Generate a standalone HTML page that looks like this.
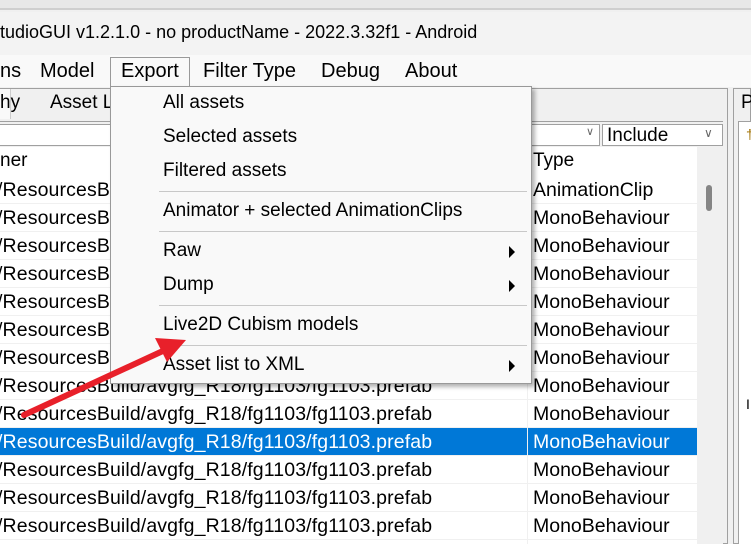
<!DOCTYPE html>
<html><head><style>
*{margin:0;padding:0;box-sizing:border-box}
body{width:751px;height:544px;overflow:hidden;background:#f0f0f0;font-family:"Liberation Sans",sans-serif;font-size:19px;color:#000;position:relative}
.a{position:absolute;white-space:nowrap}
.row{position:absolute;left:0;width:697px;height:28px;border-bottom:1px solid #f0f0f0;background:#fff;font-size:19.5px}
.row span{position:absolute;top:3px}
.mi{position:absolute;left:52px;font-size:19px}
.sep{position:absolute;left:48px;right:4px;height:1px;background:#c8c8c8}
.tri{position:absolute;left:398px;width:0;height:0;border-left:6px solid #000;border-top:6px solid transparent;border-bottom:6px solid transparent}
.mb{position:absolute;top:60px;font-size:20px}
</style></head><body>
<div class="a" style="left:0;top:0;width:751px;height:10px;background:#e8e8e8;border-bottom:2px solid #cfcfcf"></div>
<div class="a" style="left:0;top:12px;width:751px;height:43px;background:#f3f3f3"></div>
<div class="a" style="left:0;top:22px;font-size:18px">tudioGUI v1.2.1.0 - no productName - 2022.3.32f1 - Android</div>
<div class="a" style="left:0;top:55px;width:751px;height:32px;background:#f9f9f9"></div>
<div class="a" style="left:110px;top:57px;width:80px;height:30px;border:1px solid #999;border-bottom:none;background:#f9f9f9"></div>
<div class="mb" style="left:0">ns</div>
<div class="mb" style="left:40px">Model</div>
<div class="mb" style="left:121px">Export</div>
<div class="mb" style="left:203px">Filter Type</div>
<div class="mb" style="left:321px">Debug</div>
<div class="mb" style="left:405px">About</div>
<div class="a" style="left:0;top:88px;width:728px;height:456px;border:1px solid #a0a0a0;border-left:none;background:#f0f0f0"></div>
<div class="a" style="left:0;top:89px;width:11px;height:30px;background:#f9f9f9;border-right:1px solid #ccc"></div>
<div class="a" style="left:0;top:92px">hy</div>
<div class="a" style="left:50px;top:92px">Asset L</div>
<div class="a" style="left:0;top:121px;width:723px;height:1px;background:#a0a0a0"></div>
<div class="a" style="left:0;top:124px;width:600px;height:22px;background:#fff;border:1px solid #a0a0a0;border-left:none"></div>
<div class="a" style="left:586px;top:125px;font-size:11px;color:#666">&#8744;</div>
<div class="a" style="left:602px;top:124px;width:121px;height:22px;background:#fff;border:1px solid #a0a0a0"></div>
<div class="a" style="left:607px;top:125px">Include</div>
<div class="a" style="left:704px;top:126px;font-size:12px;color:#666">&#8744;</div>
<div class="a" style="left:0;top:147px;width:723px;height:397px;background:#fff"></div>
<div class="a" style="left:0;top:150px">ner</div>
<div class="a" style="left:533px;top:150px">Type</div>
<div class="a" style="left:697px;top:147px;width:26px;height:397px;background:#f0f0f0"></div>
<div class="a" style="left:706px;top:185px;width:6px;height:26px;background:#858585;border-radius:3px"></div>
<div id="rows"></div>
<div class="a" style="left:527px;top:176px;width:1px;height:368px;background:#f0f0f0"></div>
<div class="a" style="left:733px;top:88px;width:18px;height:456px;border:1px solid #a0a0a0;background:#f0f0f0"></div>
<div class="a" style="left:741px;top:92px">P</div>
<div class="a" style="left:738px;top:121px;width:13px;height:423px;border-left:1px solid #a0a0a0;border-top:1px solid #a0a0a0;background:#fff"></div>
<div class="a" style="left:746px;top:126px;font-size:14px;color:#a07000">&#8224;</div>
<div class="a" style="left:746px;top:396px;font-size:14px">I</div>
<div class="a" style="left:110px;top:86px;width:422px;height:298px;background:#f9f9f9;border:1px solid #999;box-shadow:3px 3px 4px rgba(0,0,0,0.3)">
<div class="mi" style="top:5px">All assets</div>
<div class="mi" style="top:39px">Selected assets</div>
<div class="mi" style="top:73px">Filtered assets</div>
<div class="sep" style="top:104px"></div>
<div class="mi" style="top:113px">Animator + selected AnimationClips</div>
<div class="sep" style="top:144px"></div>
<div class="mi" style="top:153px">Raw</div><div class="tri" style="top:159px"></div>
<div class="mi" style="top:187px">Dump</div><div class="tri" style="top:193px"></div>
<div class="sep" style="top:218px"></div>
<div class="mi" style="top:227px">Live2D Cubism models</div>
<div class="sep" style="top:258px"></div>
<div class="mi" style="top:267px">Asset list to XML</div><div class="tri" style="top:273px"></div>
</div>
<svg class="a" style="left:0;top:0" width="751" height="544"><line x1="24" y1="415" x2="165" y2="350" stroke="#e8202a" stroke-width="6" stroke-linecap="round"/><polygon points="186,340 155,338 167,362" fill="#e8202a"/></svg>
<script>
var h='',y=176;
for(var i=0;i<13;i++){var s=i==9;var t=i==0?'AnimationClip':'MonoBehaviour';var n='/ResourcesBuild/avgfg_R18/fg1103/fg1103.prefab';
h+='<div class="row" style="top:'+y+'px;'+(s?'background:#0078d7;color:#fff;':'')+'"><span style="left:-3px;letter-spacing:0.12px">'+n+'</span><span style="left:533px">'+t+'</span></div>';y+=28;}
document.getElementById('rows').innerHTML=h;
</script>
</body></html>
